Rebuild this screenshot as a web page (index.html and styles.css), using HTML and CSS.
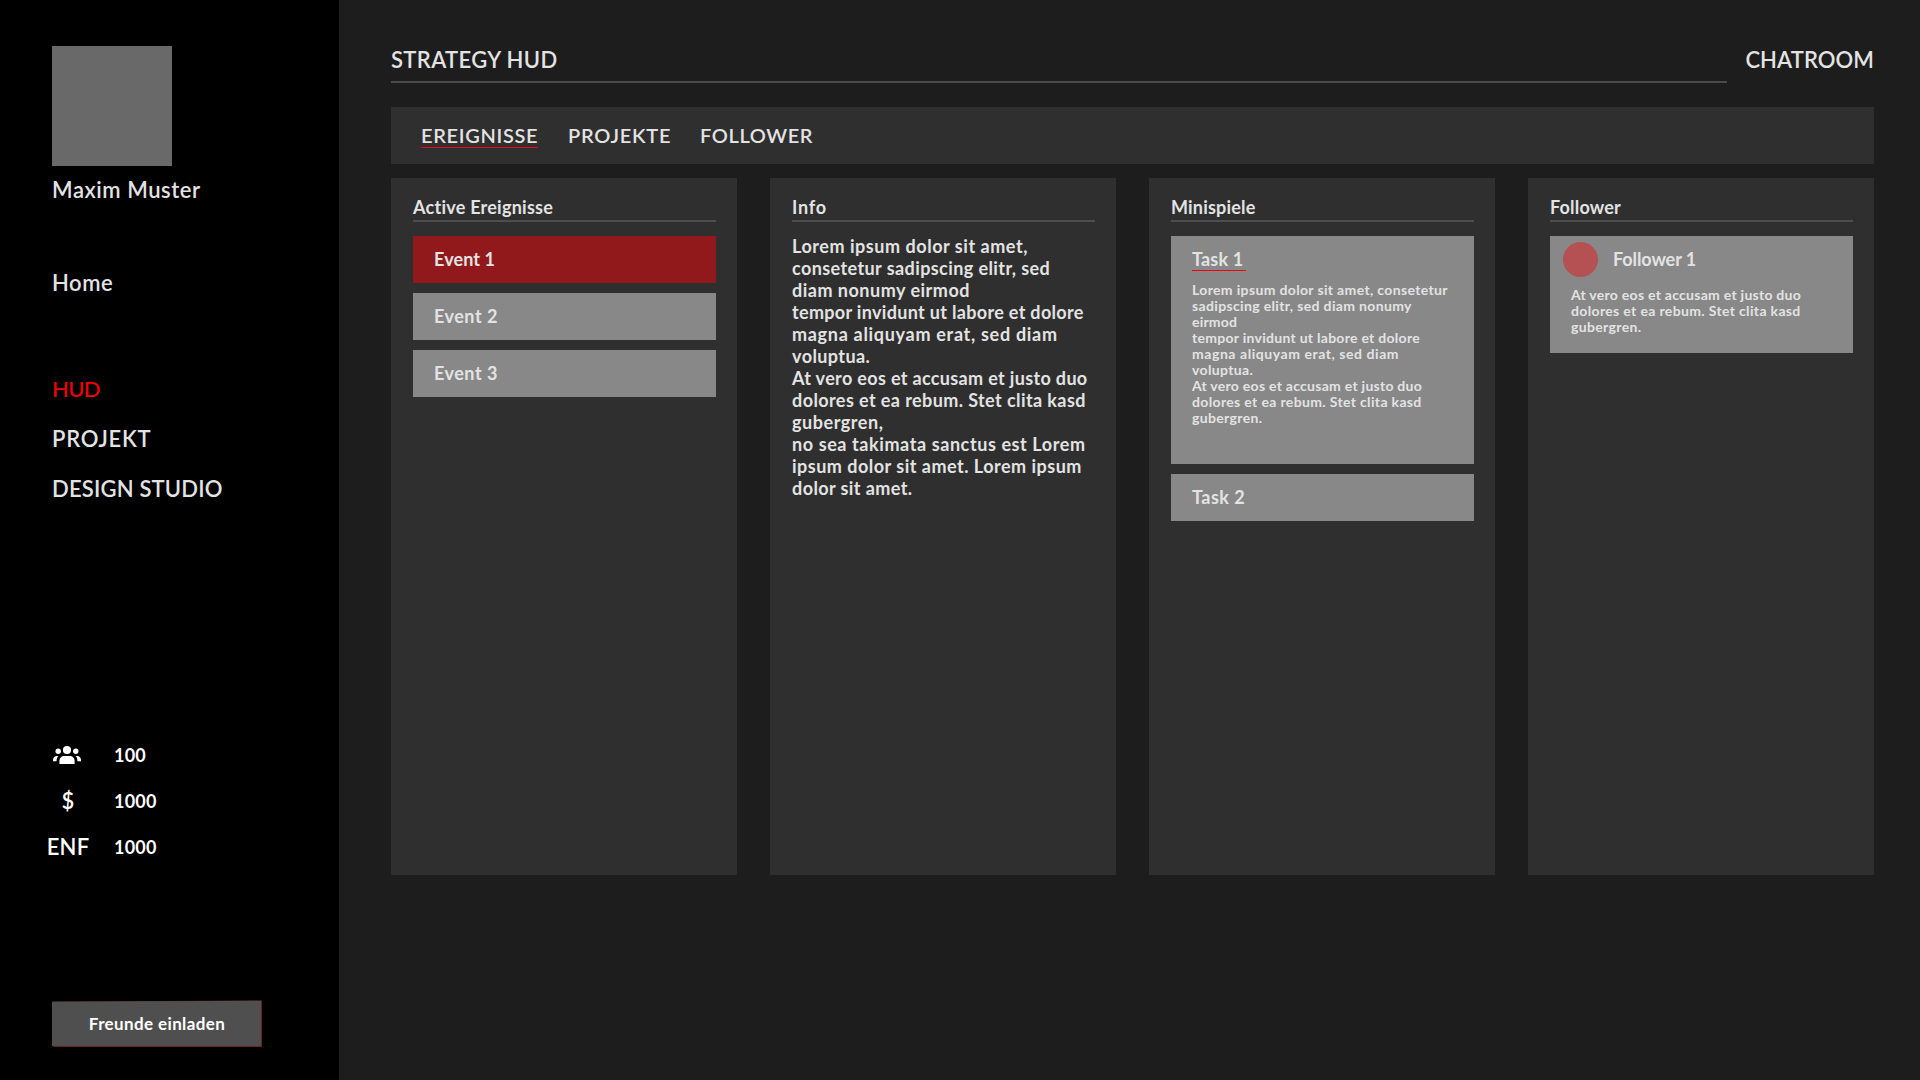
FILE: index.html
```html
<!DOCTYPE html>
<html lang="de">
<head>
  <meta charset="utf-8">
  <title>Strategy HUD</title>
  <link rel="stylesheet" href="styles.css">
</head>
<body>
  <aside class="sidebar">
    <div class="avatar"></div>
    <div class="user-name">Maxim Muster</div>
    <a class="home">Home</a>
    <nav class="menu">
      <a class="menu-active">HUD</a>
      <a class="menu-projekt">PROJEKT</a>
      <a class="menu-studio">DESIGN STUDIO</a>
    </nav>
    <div class="stats">
      <div class="stat">
        <svg class="stat-icon" width="30" height="20" viewBox="0 0 30 20" fill="#fff">
          <circle cx="15" cy="5" r="4.1"/>
          <circle cx="6.2" cy="6.2" r="2.7"/>
          <circle cx="23.8" cy="6.2" r="2.7"/>
          <path d="M7.4 18.9v-3c0-2.8 2.2-4.9 5-4.9h5.2c2.8 0 5 2.1 5 4.9v3z"/>
          <path d="M1 16.3v-1.2c0-2.3 1.5-4.1 3.8-4.1h1.4c-1 1.3-1.5 2.7-1.7 5.3z"/>
          <path d="M29 16.3v-1.2c0-2.3-1.5-4.1-3.8-4.1h-1.4c1 1.3 1.5 2.7 1.7 5.3z"/>
        </svg>
        <span class="stat-value">100</span>
      </div>
      <div class="stat"><span class="stat-label">$</span><span class="stat-value">1000</span></div>
      <div class="stat"><span class="stat-label">ENF</span><span class="stat-value">1000</span></div>
    </div>
    <button class="invite">
      <svg class="invite-shape" width="210" height="47" viewBox="0 0 210 47">
        <path d="M1 1.5L210 0.5V47H1z" fill="#6b1f1f"/>
        <path d="M0 1.7L209 0.7V46H0z" fill="#4f4f4f"/>
      </svg>
      <span class="invite-text">Freunde einladen</span>
    </button>
  </aside>

  <main class="main">
    <header class="header">
      <h1 class="title">STRATEGY HUD</h1>
      <a class="chatroom">CHATROOM</a>
    </header>
    <nav class="tabs">
      <a class="tab tab-active">EREIGNISSE</a>
      <a class="tab tab-projekte">PROJEKTE</a>
      <a class="tab tab-follower">FOLLOWER</a>
    </nav>
    <div class="columns">
      <section class="column">
        <h2 class="column-title title-events">Active Ereignisse</h2>
        <div class="cards">
          <div class="card card-active">Event 1</div>
          <div class="card card-second">Event 2</div>
          <div class="card card-second">Event 3</div>
        </div>
      </section>
      <section class="column">
        <h2 class="column-title title-info">Info</h2>
        <p class="info">
          <span>Lorem ipsum dolor sit amet,</span>
          <span>consetetur sadipscing elitr, sed</span>
          <span>diam nonumy eirmod</span>
          <span>tempor invidunt ut labore et dolore</span>
          <span>magna aliquyam erat, sed diam</span>
          <span>voluptua.</span>
          <span>At vero eos et accusam et justo duo</span>
          <span>dolores et ea rebum. Stet clita kasd</span>
          <span>gubergren,</span>
          <span>no sea takimata sanctus est Lorem</span>
          <span>ipsum dolor sit amet. Lorem ipsum</span>
          <span>dolor sit amet.</span>
        </p>
      </section>
      <section class="column">
        <h2 class="column-title title-games">Minispiele</h2>
        <div class="cards">
          <div class="card card-task">
            <div class="task-name">Task 1</div>
            <p class="small task-text">
              <span>Lorem ipsum dolor sit amet, consetetur</span>
              <span>sadipscing elitr, sed diam nonumy</span>
              <span>eirmod</span>
              <span>tempor invidunt ut labore et dolore</span>
              <span>magna aliquyam erat, sed diam</span>
              <span>voluptua.</span>
              <span>At vero eos et accusam et justo duo</span>
              <span>dolores et ea rebum. Stet clita kasd</span>
              <span>gubergren.</span>
            </p>
          </div>
          <div class="card card-second">Task 2</div>
        </div>
      </section>
      <section class="column">
        <h2 class="column-title title-follower">Follower</h2>
        <div class="cards">
          <div class="card card-follower">
            <div class="follower-head"><i class="follower-dot"></i><span class="follower-name">Follower 1</span></div>
            <p class="small follower-text">
              <span>At vero eos et accusam et justo duo</span>
              <span>dolores et ea rebum. Stet clita kasd</span>
              <span>gubergren.</span>
            </p>
          </div>
        </div>
      </section>
    </div>
  </main>
</body>
</html>
```
FILE: styles.css
```css
* { box-sizing: border-box; margin: 0; padding: 0; }

body {
  display: flex;
  width: 1920px;
  height: 1080px;
  overflow: hidden;
  background: #1d1d1d;
  color: #e3e3e3;
  font: 700 18px/22px Lato, sans-serif;
  white-space: nowrap;
}

/* Sidebar */
.sidebar {
  display: flex;
  flex-direction: column;
  align-items: flex-start;
  width: 339px;
  height: 1080px;
  padding: 46px 0 33px 52px;
  background: #000;
  font-size: 22px;
  font-weight: 600;
  line-height: 26px;
}
.avatar { width: 120px; height: 120px; background: #696969; }
.user-name { margin-top: 11px; letter-spacing: 0.57px; }
.home { margin-top: 67px; letter-spacing: 0.54px; }
.menu { display: flex; flex-direction: column; gap: 24px; margin-top: 80px; }
.menu-active { color: #f20000; font-weight: 500; letter-spacing: -0.7px; }
.menu-projekt { letter-spacing: 0.76px; }
.menu-studio { letter-spacing: 0.18px; }

.stats {
  display: flex;
  flex-direction: column;
  gap: 20px;
  margin: 240px 0 0 -9px;
  color: #fff;
}
.stat { display: flex; align-items: center; height: 26px; }
.stat-icon { width: 30px; margin-left: 9px; margin-right: 32px; }
.stat-label { width: 50px; margin-right: 21px; text-align: center; letter-spacing: 0.2px; }
.stat-value { font-size: 18px; font-weight: 700; letter-spacing: 0.2px; }

.invite {
  display: grid;
  place-items: center;
  width: 210px;
  height: 47px;
  margin-top: auto;
  border: 0;
  background: none;
  color: #fff;
  font: 700 17px/22px Lato, sans-serif;
}
.invite-shape, .invite-text { grid-area: 1 / 1; }
.invite-text { letter-spacing: 0.38px; }

/* Header */
.main { width: 1483px; margin-left: 52px; padding-top: 47px; }
.header {
  display: flex;
  justify-content: space-between;
  height: 60px;
  font-size: 22px;
  font-weight: 600;
  line-height: 26px;
}
.title {
  width: 1336px;
  height: 36px;
  border-bottom: 2px solid #4a4a4a;
  font: inherit;
  letter-spacing: 0.36px;
}
.chatroom { letter-spacing: 0.08px; }

/* Tabs */
.tabs {
  display: flex;
  align-items: flex-start;
  gap: 30px;
  height: 57px;
  padding: 17px 30px 0;
  background: #2f2f2f;
  font-size: 20px;
  font-weight: 600;
  line-height: 23px;
}
.tab { height: 24px; }
.tab-active { width: 117px; border-bottom: 1px solid #e30d0d; letter-spacing: 0.67px; }
.tab-projekte { width: 102px; letter-spacing: 0.77px; }
.tab-follower { letter-spacing: 0.6px; }

/* Columns */
.columns {
  display: grid;
  grid-template-columns: repeat(4, 346px);
  gap: 33px;
  margin-top: 14px;
}
.column { height: 697px; padding: 18px 21px 0 22px; background: #2f2f2f; }
.column-title {
  height: 26px;
  border-bottom: 2px solid #4e4e4e;
  font: inherit;
}
.title-events { letter-spacing: 0.25px; }
.title-info { letter-spacing: 0.8px; }
.title-games { letter-spacing: 0.2px; }
.title-follower { letter-spacing: 0.18px; }

.cards { display: flex; flex-direction: column; gap: 10px; margin-top: 14px; }
.card {
  height: 47px;
  padding: 12px 21px 0;
  background: #888;
  letter-spacing: 0.09px;
}
.card-active { background: #92191b; }
.card-second { letter-spacing: 0.5px; }
.card-task { height: 228px; }
.card-follower { height: 117px; padding: 6px 13px 0; }

.task-name {
  width: 54px;
  height: 23px;
  border-bottom: 1px solid #f00;
  letter-spacing: 0.2px;
}

/* Running text, tracked line by line */
.info span, .small span { display: block; }
.info { margin-top: 13px; letter-spacing: 0.41px; }
.info span:nth-child(1) { letter-spacing: 0.54px; }
.info span:nth-child(3) { letter-spacing: 0.5px; }
.info span:nth-child(4) { letter-spacing: 0.32px; }
.info span:nth-child(5) { letter-spacing: 0.7px; }
.info span:nth-child(7) { letter-spacing: 0.34px; }
.info span:nth-child(9) { letter-spacing: 0.54px; }
.info span:nth-child(10) { letter-spacing: 0.59px; }
.info span:nth-child(11) { letter-spacing: 0.49px; }

.small { font-size: 14px; line-height: 16px; letter-spacing: 0.35px; }
.task-text { margin-top: 11px; }
.task-text span:nth-child(3) { letter-spacing: 0.2px; }
.task-text span:nth-child(4) { letter-spacing: 0.28px; }
.task-text span:nth-child(5) { letter-spacing: 0.56px; }
.task-text span:nth-child(7), .follower-text span:nth-child(1) { letter-spacing: 0.27px; }

.follower-head { display: flex; align-items: flex-start; gap: 15px; height: 35px; letter-spacing: -0.09px; }
.follower-name { padding-top: 6px; }
.follower-dot { width: 35px; height: 35px; border-radius: 50%; background: #b55152; }
.follower-text { margin: 10px 0 0 8px; }
```
